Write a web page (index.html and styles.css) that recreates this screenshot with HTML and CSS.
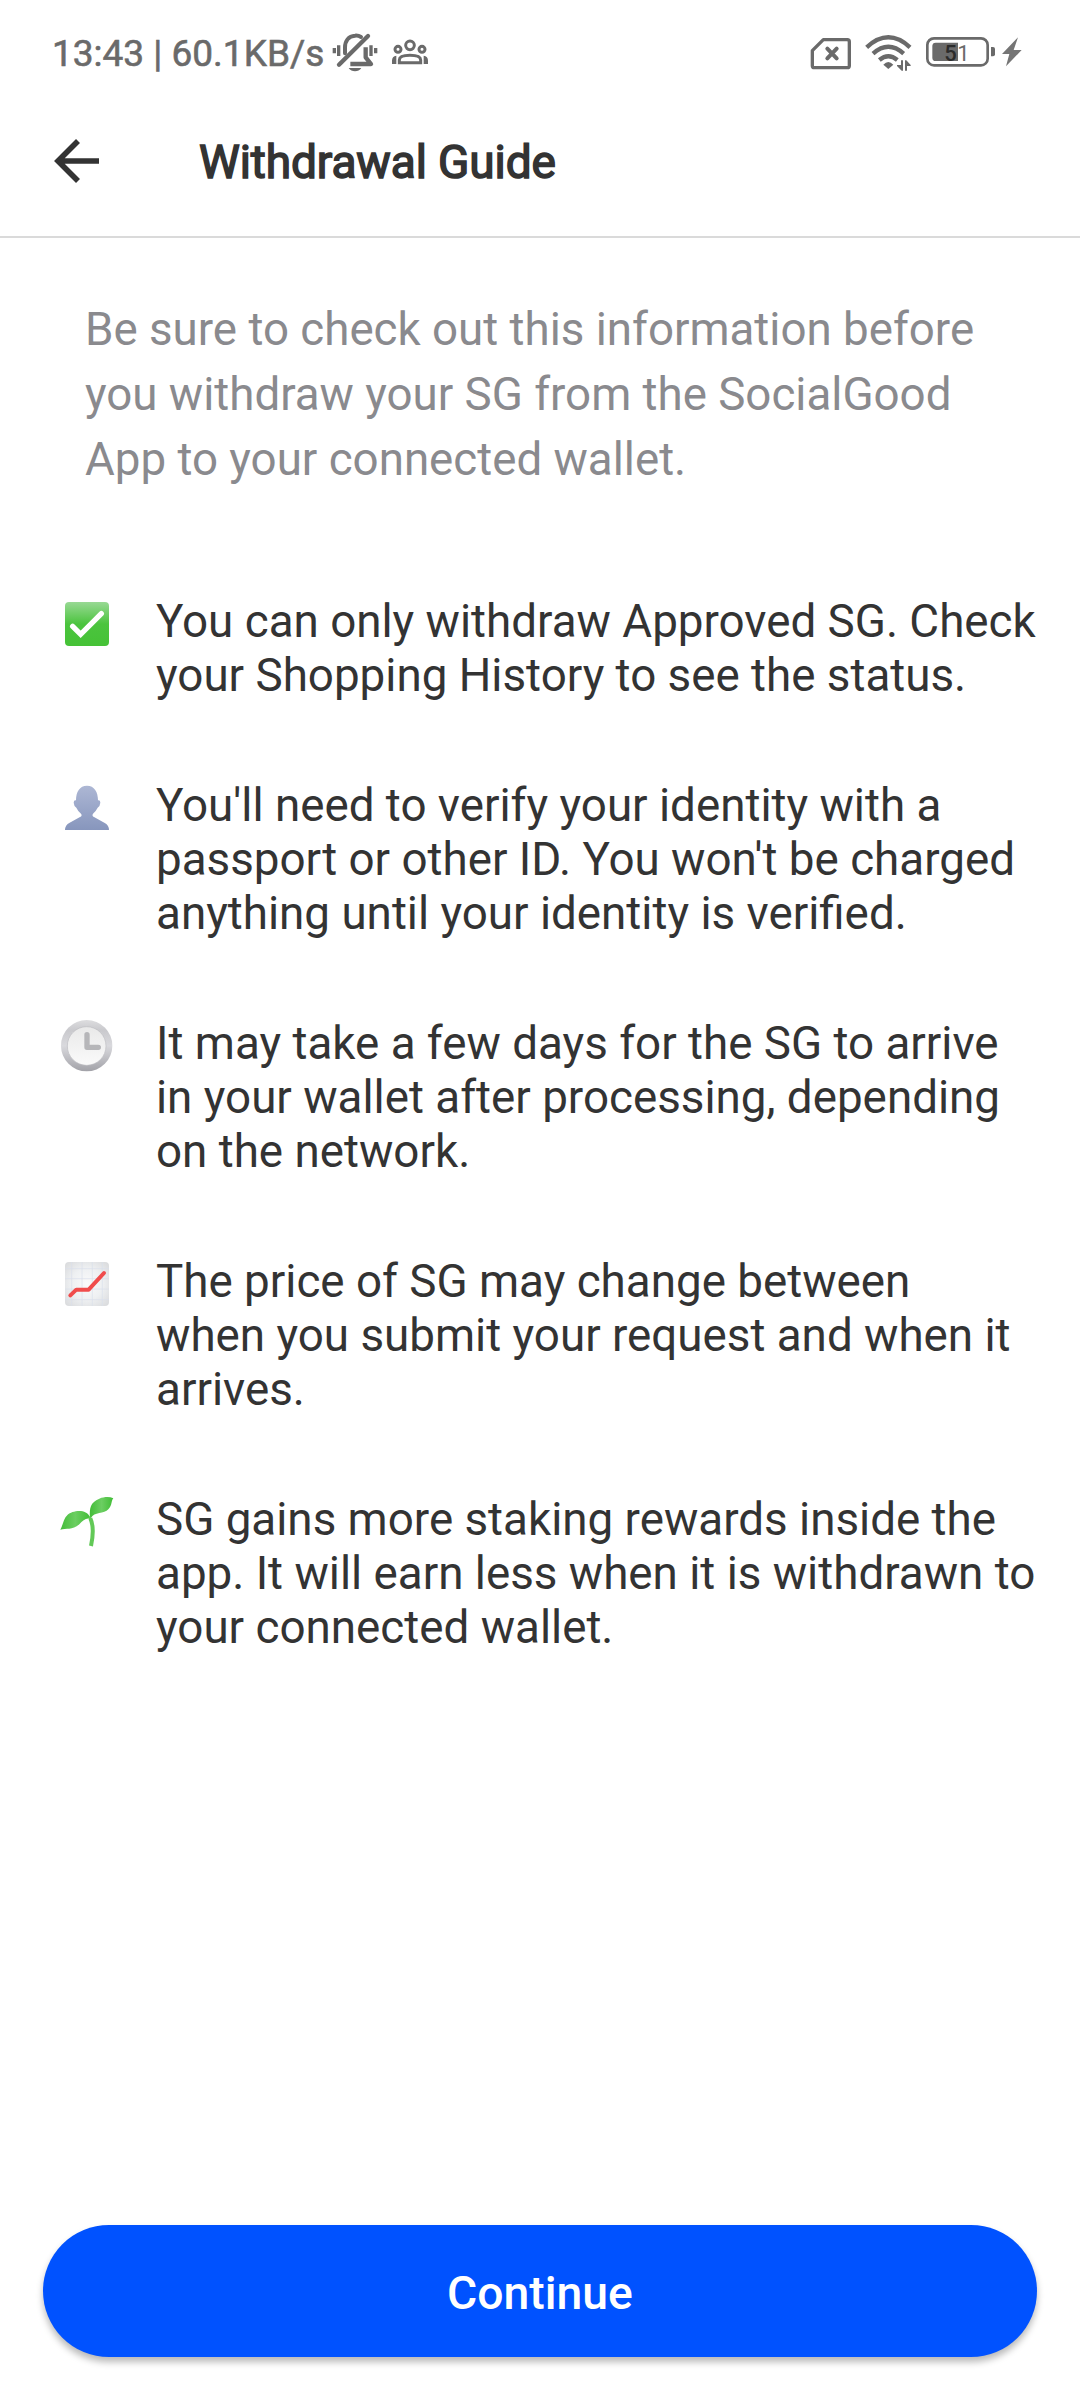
FILE: index.html
```html
<!DOCTYPE html>
<html lang="en">
<head>
<meta charset="utf-8">
<title>Withdrawal Guide</title>
<link rel="stylesheet" href="styles.css">
</head>
<body>
<div class="screen">
  <div class="status">
    <span class="status-text">13:43 | 60.1KB/s</span>
    <svg class="icon-bell" width="48" height="70" viewBox="872 0 144 210" fill="none" stroke="#6a6a6a" stroke-linecap="round">
      <path d="M882 84v16M895 76v32M992 76v32M1006 84v16" stroke-width="10" stroke-linecap="butt"/>
      <path d="M914 100V82C914 64 924 48 944 47Q954 46 962 51" stroke-width="12"/>
      <path d="M896 134L983 48" stroke-width="13"/>
      <path d="M976 82v30l16 20H930" stroke-width="13" stroke-linecap="butt" stroke-linejoin="round"/>
      <path d="M925 144h38q-7 10-19 10t-19-10z" fill="#6a6a6a" stroke="none"/>
    </svg>
    <svg class="icon-group" width="38" height="70" viewBox="1053 0 114 210" fill="none" stroke="#6a6a6a" stroke-width="9">
      <circle cx="1110" cy="76" r="13"/><circle cx="1074" cy="88" r="9"/><circle cx="1146" cy="88" r="9"/>
      <path d="M1078 128v-8q0-14 32-14t32 14v8z" stroke-width="9"/>
      <path d="M1056 132v-10q0-13 13-15v25zM1164 132v-10q0-13-13-15v25z" fill="#6a6a6a" stroke="none"/>
    </svg>
    <svg class="icon-sim" width="44" height="70" viewBox="58 0 132 210" fill="none" stroke="#6a6a6a" stroke-width="10" stroke-linejoin="round" stroke-linecap="round">
      <path d="M68 92L101 59H173q6 0 6 6V137q0 6-6 6H74q-6 0-6-6z"/>
      <path d="M113 86l28 29M141 86l-28 29" stroke-width="12"/>
    </svg>
    <svg class="icon-wifi" width="50" height="70" viewBox="220 0 150 210" fill="none" stroke="#6a6a6a" stroke-width="13">
      <path d="M231 82Q296 22 361 82M250 101Q296 60 342 101M269 120Q296 98 323 120"/>
      <path d="M281 134Q296 118 311 134L296 147z" fill="#6a6a6a" stroke="none"/>
      <path d="M334 121h6v31h-4l-14-14v-3h12zM346 152v-31h4l13 14v3h-11v14z" fill="#6a6a6a" stroke="none"/>
    </svg>
    <svg class="icon-battery" width="72" height="70" viewBox="408 0 216 210">
      <rect x="415" y="55" width="181" height="81" rx="20" fill="none" stroke="#6a6a6a" stroke-width="8"/>
      <path d="M440 68h67v55h-67q-10 0-10-10V78q0-10 10-10z" fill="#6a6a6a"/>
      <path d="M606 81h6q6 0 6 6v16q0 6-6 6h-6z" fill="#6a6a6a"/>
      <text x="466" y="122" font-size="66" font-weight="500" fill="#2b2b2b">5</text>
      <text x="505" y="122" font-size="66" fill="#6a6a6a">1</text>
    </svg>
    <svg class="icon-bolt" width="22" height="70" viewBox="635 0 66 210" fill="#757575"><path d="M686 52L638 102H660L650 139L697 90H673z"/></svg>
  </div>
  <header class="header">
    <svg class="back" width="46" height="46" viewBox="0 0 46 46" fill="none" stroke="#333" stroke-width="5.6"><path d="M45 23H5M24 3L4 23L24 43"/></svg>
    <h1 class="title">Withdrawal Guide</h1>
  </header>
  <main class="content">
    <p class="intro">Be sure to check out this information before<br>you withdraw your SG from the SocialGood<br>App to your connected wallet.</p>
    <ul class="list">
      <li class="item">
        <svg class="icon" viewBox="0 15 240 162"><defs><linearGradient id="green" x2="0" y2="1"><stop stop-color="#98d994"/><stop offset=".5" stop-color="#4bc43e"/><stop offset="1" stop-color="#45c236"/></linearGradient></defs><rect x="45" y="36" width="132" height="132" rx="12" fill="url(#green)"/><path d="M68 109L92 133L154 71" fill="none" stroke="#fff" stroke-width="16" stroke-linecap="round"/></svg>
        <p class="text">You can only withdraw Approved SG. Check<br>your Shopping History to see the status.</p>
      </li>
      <li class="item">
        <svg class="icon" viewBox="0 27 240 162"><defs><linearGradient id="person" x2="0" y2="1"><stop stop-color="#adb7d4"/><stop offset="1" stop-color="#8796bd"/></linearGradient></defs><path d="M111 47C133 47 144 66 144 91Q151 90 151 98Q150 109 143 113Q137 125 129 131Q125 138 132 141L163 158Q177 165 177 180H45Q45 165 59 158L90 141Q98 137 93 131Q84 124 79 113Q72 109 71 98Q71 90 78 91C78 66 89 47 111 47z" fill="url(#person)"/></svg>
        <p class="text">You'll need to verify your identity with a<br>passport or other ID. You won't be charged<br>anything until your identity is verified.</p>
      </li>
      <li class="item">
        <svg class="icon" viewBox="0 21 240 162"><defs><linearGradient id="rim" x2="0" y2="1"><stop stop-color="#dddddf"/><stop offset=".2" stop-color="#c9c9cd"/><stop offset=".5" stop-color="#d9d9dd"/><stop offset="1" stop-color="#a2a2a8"/></linearGradient><linearGradient id="face" x2="0" y2="1"><stop stop-color="#e9e9e9"/><stop offset="1" stop-color="#fafafa"/></linearGradient></defs><circle cx="110" cy="107" r="77" fill="url(#rim)"/><circle cx="110" cy="108" r="58" fill="url(#face)" stroke="#bdbdc1" stroke-width="2"/><path d="M111 74V112H145" fill="none" stroke="#b6b6b9" stroke-width="16" stroke-linecap="round" stroke-linejoin="round"/></svg>
        <p class="text">It may take a few days for the SG to arrive<br>in your wallet after processing, depending<br>on the network.</p>
      </li>
      <li class="item">
        <svg class="icon" viewBox="0 15 240 162"><defs><radialGradient id="paper" r=".72"><stop stop-color="#fafafb"/><stop offset=".5" stop-color="#eef0f2"/><stop offset="1" stop-color="#d7d8da"/></radialGradient></defs><rect x="45" y="36" width="132" height="132" rx="12" fill="url(#paper)"/><path d="M65 36V168M96 36V168M127 36V168M157 36V168M45 56H177M45 86H177M45 117H177M45 149H177" stroke="#dadfeb" stroke-width="2"/><path d="M61 136L79 119H116L162 69" fill="none" stroke="#f04c4c" stroke-width="12" stroke-linecap="round" stroke-linejoin="round"/></svg>
        <p class="text">The price of SG may change between<br>when you submit your request and when it<br>arrives.</p>
      </li>
      <li class="item">
        <svg class="icon" viewBox="0 24 240 162"><defs><linearGradient id="leaf"><stop stop-color="#43bd38"/><stop offset=".5" stop-color="#6cce62"/><stop offset="1" stop-color="#40bd35"/></linearGradient></defs><path d="M121 98C108 68 66 78 53 89C39 102 39 121 31 134C49 129 66 137 88 118C98 106 108 98 119 101z" fill="url(#leaf)"/><path d="M120 98C118 69 121 52 148 41C164 35 179 35 190 40C183 48 187 61 175 73C163 88 132 80 123 99z" fill="url(#leaf)"/><path d="M121 100C130 119 130 150 123 183" fill="none" stroke="#62c957" stroke-width="12"/><path d="M118 95L122 106" stroke="#62c957" stroke-width="6"/></svg>
        <p class="text">SG gains more staking rewards inside the<br>app. It will earn less when it is withdrawn to<br>your connected wallet.</p>
      </li>
    </ul>
  </main>
  <footer class="footer"><button class="button">Continue</button></footer>
</div>
</body>
</html>
```
FILE: styles.css
```css
* { box-sizing: border-box; }
body { margin: 0; background: #fff; font-family: Roboto, sans-serif; color: #333; }
svg { display: block; flex: none; }
p, h1, ul { margin: 0; padding: 0; }
.screen { width: 1080px; height: 2400px; display: flex; flex-direction: column; }
.status { height: 90px; padding: 20px 57px 0 52px; display: flex; align-items: flex-start; font-family: Roboto, sans-serif; }
.status-text { width: 278.7px; font-size: 37px; line-height: 68px; color: #6a6a6a; white-space: nowrap; -webkit-text-stroke: .6px #6a6a6a; }
.icon-group { margin-left: 12.3px; }
.icon-sim { margin-left: auto; }
.icon-wifi { margin-left: 10px; }
.icon-battery { margin-left: 12.7px; }
.icon-bolt { margin-left: 3.6px; }
.header { height: 148px; padding: 48px 55px 0 54px; border-bottom: 2px solid #dadada; display: flex; align-items: flex-start; }
.title { margin-left: 99px; font-size: 46px; line-height: 48px; font-weight: 400; letter-spacing: -.1px; -webkit-text-stroke: 1.5px #333; white-space: nowrap; }
.content { flex: 1; padding-top: 59px; }
.intro { margin-left: 85px; font-size: 45.7px; line-height: 65px; color: #8a8a8e; white-space: nowrap; }
.list { list-style: none; margin-top: 103px; display: flex; flex-direction: column; gap: 76px; }
.item { display: flex; align-items: flex-start; padding-left: 50px; gap: 26px; }
.icon { width: 80px; height: 54px; overflow: visible; }
.text { font-size: 45.75px; line-height: 54px; white-space: nowrap; }
.footer { padding: 0 43px 43px; }
.button { display: block; width: 994px; height: 132px; border: 0; border-radius: 66px; padding: 3px 0 0; background: #0052ff; color: #fff; font: 500 46.3px Roboto, sans-serif; box-shadow: 0 5px 7px rgba(0,0,0,.28); }
```
